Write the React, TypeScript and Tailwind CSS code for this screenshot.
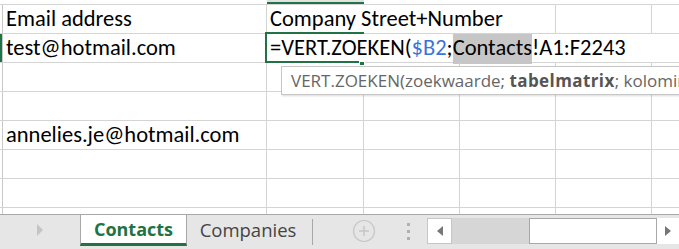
const FONT = { fontFamily: "Calibri, Carlito, Lato, 'Liberation Sans', sans-serif" };
const UI = { fontFamily: "'Segoe UI', 'Open Sans', 'Noto Sans', sans-serif" };

const line = "border-[#d4d4d4]";

function Row({ children, green }: { children?: React.ReactNode; green?: boolean }) {
  return (
    <div className={`flex h-[29px] border-b ${line}`}>
      <div className={`w-[3px] shrink-0 border-r border-[#c8c8c8] ${green ? "bg-[#217346]" : ""}`} />
      {children}
    </div>
  );
}

function Cell({ w, text, last }: { w: string; text?: React.ReactNode; last?: boolean }) {
  return (
    <div
      className={`${w} shrink-0 ${last ? "flex-1" : "border-r"} ${line} flex items-end whitespace-nowrap pb-[3px] pl-[3px] text-[22.5px] leading-[22px] text-black`}
    >
      {text}
    </div>
  );
}

function Blank({ a }: { a?: React.ReactNode }) {
  return (
    <Row>
      <Cell w="w-[264px]" text={a} />
      <Cell w="w-[97px]" />
      <Cell w="w-[96px]" />
      <Cell w="w-[96px]" />
      <Cell w="w-[96px]" />
      <Cell w="w-auto" last />
    </Row>
  );
}

export default function App() {
  return (
    <div className="relative h-[249px] w-[679px] overflow-hidden bg-white" style={FONT}>
      {/* column header strip */}
      <div className={`flex h-[5px] border-b ${line}`}>
        <div className="w-[267px]" />
        <div className="h-[4px] w-[97px] border-b-2 border-[#217346] bg-[#e1e1e1]" />
      </div>

      <Row>
        <Cell w="w-[264px]" text="Email address" />
        <Cell w="w-[289px]" text="Company Street+Number" />
        <Cell w="w-[96px]" />
        <Cell w="w-auto" last />
      </Row>
      <Row green>
        <Cell w="w-[264px]" text="test@hotmail.com" />
        <Cell
          w="w-auto"
          last
          text={
            <span>
              =VERT.ZOEKEN(<span className="text-[#3a74d9]">$B2</span>;
              <span className="bg-[#c6c6c6] pb-[3px]">Contacts</span>!A1:F2243
            </span>
          }
        />
      </Row>
      <Blank />
      <Blank />
      <Blank a="annelies.je@hotmail.com" />
      <Blank />
      <Blank />
      <div className="flex h-[6px]">
        <div className="w-[3px] border-r border-[#c8c8c8]" />
        <div className={`w-[264px] border-r ${line}`} />
        <div className={`w-[97px] border-r ${line}`} />
        <div className={`w-[96px] border-r ${line}`} />
        <div className={`w-[96px] border-r ${line}`} />
        <div className={`w-[96px] border-r ${line}`} />
      </div>

      {/* sheet tabs */}
      <div className="flex h-[36px] border-t border-[#a8a8a8] bg-[#e6e6e6]" style={UI}>
        <div className="flex w-[80px] items-center justify-center pb-[6px]">
          <svg width="8" height="12" viewBox="0 0 8 12">
            <path d="M1 0 L7 6 L1 12 Z" fill="#c4c4c4" />
          </svg>
        </div>
        <div className="flex h-[31px] w-[107px] items-center justify-center border-x border-b-[3px] border-x-[#a8a8a8] border-b-[#217346] bg-white pt-[1px] text-[18px] font-bold text-[#217346]">
          Contacts
        </div>
        <div className="flex h-[30px] w-[126px] items-center">
          <div className="flex-1 pr-[3px] text-center text-[18.5px] text-[#444]">Companies</div>
          <div className="h-[26px] w-px self-end bg-[#a8a8a8]" />
        </div>
        <div className="flex h-[32px] w-[114px] items-center pl-[39px]">
          <svg width="24" height="24" viewBox="0 0 24 24">
            <circle cx="12" cy="12" r="10.5" fill="none" stroke="#c6c6c6" strokeWidth="1.2" />
            <path d="M12 7 V17 M7 12 H17" stroke="#c6c6c6" strokeWidth="1.5" />
          </svg>
          <div className="ml-[31px] flex flex-col gap-[4px]">
            <div className="h-[3px] w-[3px] bg-[#b0b0b0]" />
            <div className="h-[3px] w-[3px] bg-[#b0b0b0]" />
            <div className="h-[3px] w-[3px] bg-[#b0b0b0]" />
          </div>
        </div>
        <div className="mt-[3px] flex h-[26px] flex-1">
          <div className="flex w-[25px] items-center justify-center border border-[#c6c6c6] bg-white">
            <svg width="6" height="10" viewBox="0 0 6 10">
              <path d="M6 0 L0 5 L6 10 Z" fill="#777" />
            </svg>
          </div>
          <div className="w-[77px] bg-[#d6d6d6]" />
          <div className="w-[128px] border border-[#a8a8a8] bg-white" />
          <div className="flex flex-1 items-center justify-center bg-white">
            <svg width="6" height="10" viewBox="0 0 6 10">
              <path d="M0 0 L6 5 L0 10 Z" fill="#777" />
            </svg>
          </div>
        </div>
      </div>

      {/* active cell (in edit mode: text runs over the right edge) */}
      <div className="absolute left-[265px] top-[32px] h-[31px] w-[99px] border-2 border-r-0 border-[#217346]" />
      <div className="absolute left-[359px] top-[61px] h-[5px] w-[6px] border border-white bg-[#217346]" />

      {/* formula tooltip */}
      <div
        className="absolute left-[281px] top-[66px] flex h-[29px] w-[398px] items-center overflow-hidden whitespace-nowrap border-y border-l border-[#c6c6c6] bg-white pl-[9px] text-[17px] text-[#666] shadow-[1px_1px_2px_rgba(0,0,0,0.15)]"
        style={UI}
      >
        VERT.ZOEKEN(zoekwaarde;&nbsp;<b className="font-bold tracking-[0.4px] text-[#555]">tabelmatrix</b>; kolomindex_getal
      </div>
    </div>
  );
}
